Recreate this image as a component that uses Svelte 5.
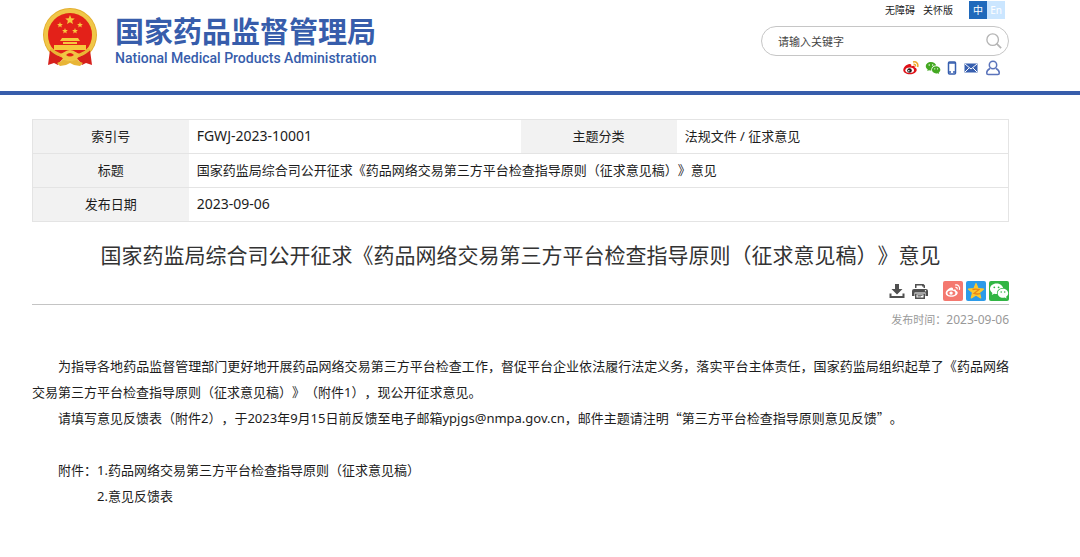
<script lang="ts">
	const docTitle = '国家药监局综合司公开征求《药品网络交易第三方平台检查指导原则（征求意见稿）》意见';

	const attachments = [
		'1.药品网络交易第三方平台检查指导原则（征求意见稿）',
		'2.意见反馈表'
	];

	let keyword = $state('');
</script>

{#snippet star(x: number, y: number, r: number)}
	<path
		transform="translate({x} {y}) scale({r})"
		d="M0-1 .26-.36.95-.31.43.14.59.81 0 .45-.59.81-.43.14-.95-.31-.26-.36z"
	/>
{/snippet}

{#snippet wechat(front: string, eye: string)}
	<path
		fill={front}
		d="M7.5 2.5C3.8 2.5 1 4.9 1 7.8c0 1.7.9 3.1 2.4 4.1l-.6 2 2.3-1.2c.8.2 1.5.3 2.400.3h.5C7.400 9.600 10.300 7 13.900 7h.2C13.500 4.400 10.800 2.500 7.500 2.500z"
	/>
	<path
		fill={front}
		d="M19.200 12.300c0-2.500-2.400-4.500-5.300-4.500s-5.200 2-5.200 4.500 2.300 4.500 5.200 4.500c.6 0 1.200-.1 1.800-.3l1.900 1-.5-1.700c1.300-.9 2.100-2.100 2.100-3.500z"
	/>
	<g fill={eye}>
		<circle cx="5.300" cy="6.300" r=".9" />
		<circle cx="9.600" cy="6.300" r=".9" />
		<circle cx="12.200" cy="11" r=".8" />
		<circle cx="15.700" cy="11" r=".8" />
	</g>
{/snippet}

<header>
	<a class="logo" href="/">
		<svg class="emblem" viewBox="0 0 56 60" aria-hidden="true">
			<circle cx="28" cy="27" r="27" fill="#e3ae2d" />
			<circle cx="28" cy="27" r="24" fill="none" stroke="#f0c648" stroke-width="4" />
			<circle cx="28" cy="27" r="22" fill="#e32119" />
			<g fill="#f6c83d">
				{@render star(28, 12, 5)}
				{@render star(18, 17, 3)}
				{@render star(38, 17, 3)}
				{@render star(23, 23, 3)}
				{@render star(33, 23, 3)}
				<path d="M20 30h16l2 3H18zM21 34h14v2H21zM12 37h32v5H12z" />
			</g>
			<path fill="#d6201c" d="M8 42c4 3 8 6 13 8l-5 7-4-2-6 2zM48 42c-4 3-8 6-13 8l5 7 4-2 6 2z" />
			<path
				fill="none"
				stroke="#e9b535"
				stroke-width="3"
				d="M9 41c3 4 7 5 12 7M47 41c-3 4-7 5-12 7"
			/>
			<path fill="#f1c544" d="M18 46c4-1 6-4 10-4s6 3 10 4c-2 4-5 6-10 6s-8-2-10-6z" />
			<path fill="#e32119" d="M24 47q4-4 8 0-4 3-8 0z" />
			<path fill="#e8b536" d="m15 55 7-3 6 2 6-2 7 3-3 3-6-1-4-2-4 2-6 1z" />
		</svg>
		<span class="names">
			<span class="name-zh">国家药品监督管理局</span>
			<span class="name-en">National Medical Products Administration</span>
		</span>
	</a>

	<div class="tools">
		<nav class="top-links">
			<a href="#accessible">无障碍</a>
			<a href="#care">关怀版</a>
			<span class="lang">
				<a class="active" href="#zh">中</a>
				<a href="#en">En</a>
			</span>
		</nav>
		<form class="search">
			<input type="search" placeholder="请输入关键字" aria-label="请输入关键字" bind:value={keyword} />
			<button aria-label="搜索">
				<svg viewBox="0 0 18 18" fill="none" stroke="#b4b4b4" stroke-width="1.500">
					<circle cx="7.500" cy="7.500" r="6.500" />
					<path d="m12 12 5 5" stroke-width="2" />
				</svg>
			</button>
		</form>
		<div class="social">
			<a href="#weibo" aria-label="微博">
				<svg viewBox="0 0 16 16">
					<path
						fill="#df1118"
						d="M6.500 4C3.500 4.300.3 7.300.3 10c0 2.500 3 4.300 6.400 4.300 4 0 7-2.200 7-4.600 0-1.400-1-2-2-2.300.4-1.600-1-2.100-3.400-1.100.4-1.600-.3-2.400-1.800-2.300z"
					/>
					<ellipse cx="6.700" cy="10.300" rx="4.300" ry="2.700" fill="#fff" />
					<circle cx="6.500" cy="10.500" r="2.300" fill="#231a1a" />
					<circle cx="5.800" cy="10.800" r=".8" fill="#fff" />
					<path fill="none" stroke="#eea629" stroke-width="1.500" d="M10 2c3.500-.8 5.600 2 4.600 5M10.500 4.300c1.600-.2 2.300.8 1.900 2.200" />
				</svg>
			</a>
			<a href="#wechat" aria-label="微信">
				<svg viewBox="0 0 20 20">{@render wechat('#43a821', '#fff')}</svg>
			</a>
			<a class="narrow" href="#mobile" aria-label="手机版">
				<svg viewBox="0 0 10 16">
					<rect x="1.500" y="2" width="7" height="12" rx="1" fill="#fff" stroke="#375faf" stroke-width="1.500" />
					<path stroke="#375faf" stroke-width="1.500" d="M2 12h2M6 12h2M2 3h6" />
				</svg>
			</a>
			<a href="#mail" aria-label="邮箱">
				<svg viewBox="0 0 16 16">
					<rect x="1.500" y="3.500" width="13" height="9" fill="#375faf" />
					<path fill="none" stroke="#fff" d="m2 4 6 5 6-5M2 12l4-4M14 12l-4-4" />
				</svg>
			</a>
			<a href="#user" aria-label="用户">
				<svg viewBox="0 0 16 16" fill="none" stroke="#5b74bb" stroke-width="1.500">
					<circle cx="8" cy="5" r="3.700" />
					<path d="M5 8.500C3 9.500 1.700 11 1.700 13q0 1.500 1.500 1.500h9.600q1.500 0 1.500-1.500c0-2-1.300-3.500-3.300-4.500" />
				</svg>
			</a>
		</div>
	</div>
</header>

<main>
	<table>
		<tbody>
			<tr>
				<th scope="row">索引号</th>
				<td class="number">FGWJ-2023-10001</td>
				<th scope="row">主题分类</th>
				<td>法规文件 / 征求意见</td>
			</tr>
			<tr>
				<th scope="row">标题</th>
				<td colspan="3">{docTitle}</td>
			</tr>
			<tr>
				<th scope="row">发布日期</th>
				<td class="number" colspan="3">2023-09-06</td>
			</tr>
		</tbody>
	</table>

	<h1>{docTitle}</h1>

	<div class="actions">
		<button aria-label="下载">
			<svg viewBox="0 0 20 20" fill="#505050">
				<path d="M8 3h4v5h3.500L10 13.500 4.500 8H8z" />
				<path d="M2.500 12.500h2V15h11v-2.500h2V17h-15z" />
			</svg>
		</button>
		<button class="print" aria-label="打印">
			<svg viewBox="0 0 20 20" fill="#505050">
				<path d="M5 3h8.500L15 4.500V7h-1.500V5.500H12v-1H6.500V7H5z" />
				<path d="M4 8h12q2 0 2 2v5h-2.500v-3.500h-11V15H2v-5q0-2 2-2z" />
				<path d="M5 12.500h10V18H5zm1.500 1v3h7v-3z" />
				<path d="M7.500 14h5v.8h-5zM7.500 15.500h3.500v.7H7.500z" />
				<circle cx="15.500" cy="9.800" r=".7" fill="#fff" />
			</svg>
		</button>
		<button class="share weibo" aria-label="分享到微博">
			<svg viewBox="0 0 20 20">
				<path
					fill="#fff"
					d="M8.500 6.500c-2.800.5-5.800 3.300-5.800 5.700 0 2.100 2.500 3.600 5.600 3.600 3.600 0 6.400-2 6.400-4 0-1.200-.9-1.700-1.800-2 .3-1.400-.9-1.800-2.900-1 .3-1.600-.3-2.400-1.500-2.300z"
				/>
				<ellipse cx="8.400" cy="12" rx="4" ry="2.500" fill="#f4786f" />
				<circle cx="8.100" cy="12.100" r="1.700" fill="#fff" />
				<path fill="none" stroke="#fff" stroke-width="1.200" d="M12 4c3.400-.7 5.300 1.800 4.400 4.900M12.300 6.300c1.500-.2 2.200.7 1.800 2.100" />
			</svg>
		</button>
		<button class="share qzone" aria-label="分享到QQ空间">
			<svg viewBox="0 0 20 20">
				<g fill="#fdc82c" stroke="#fdc82c" stroke-width=".15" stroke-linejoin="round">
					{@render star(10, 10.500, 8)}
				</g>
				<path fill="none" stroke="#e98516" stroke-width="1.300" d="M6.500 8.500c2.500-.6 4.500-.6 6.500 0l-5 4c2 .6 4 .6 6 .2" />
			</svg>
		</button>
		<button class="share wechat" aria-label="分享到微信">
			<svg viewBox="0 0 20 20">{@render wechat('#fff', '#31b544')}</svg>
		</button>
	</div>

	<p class="published">发布时间：<time datetime="2023-09-06">2023-09-06</time></p>

	<article>
		<p>
			为指导各地药品监督管理部门更好地开展药品网络交易第三方平台检查工作，督促平台企业依法履行法定义务，落实平台主体责任，国家药监局组织起草了《药品网络交易第三方平台检查指导原则（征求意见稿）》（附件1），现公开征求意见。
		</p>
		<p>
			请填写意见反馈表（附件2），于2023年9月15日前反馈至电子邮箱ypjgs@nmpa.gov.cn，邮件主题请注明<span class="quoted">“第三方平台检查指导原则意见反馈”</span>。
		</p>
		<div class="attachments">
			<span>附件：</span>
			<ul>
				{#each attachments as attachment}
					<li><a href="#attachment">{attachment}</a></li>
				{/each}
			</ul>
		</div>
	</article>
</main>

<style>
	:global(body) {
		margin: 0;
		background: #fff;
		color: #1c1c1c;
		font-family: 'Noto Sans', 'Noto Sans CJK SC', sans-serif;
		font-size: 13px;
		text-spacing-trim: space-all;
	}

	a {
		color: inherit;
		text-decoration: none;
	}

	button {
		padding: 0;
		border: none;
		background: none;
		cursor: pointer;
	}

	svg {
		display: block;
		width: 100%;
		height: 100%;
	}

	header {
		display: flex;
		justify-content: space-between;
		height: 91px;
		padding: 0 71px 0 42px;
		border-bottom: 4px solid #375dab;
	}

	.logo {
		display: flex;
		align-items: flex-start;
		gap: 17px;
		padding-top: 8px;
		color: #375dab;
	}

	.emblem {
		width: 56px;
		height: 60px;
	}

	.names {
		display: flex;
		flex-direction: column;
		padding-top: 4px;
	}

	.name-zh {
		font-family: 'Noto Sans CJK SC', sans-serif;
		font-size: 29px;
		font-weight: 700;
		line-height: 36px;
	}

	.name-en {
		font-family: Roboto, sans-serif;
		font-size: 14px;
		font-weight: 500;
		line-height: 20px;
	}

	.tools {
		width: 248px;
		padding-top: 1px;
	}

	.top-links {
		display: flex;
		justify-content: flex-end;
		align-items: center;
		gap: 8px;
		padding-right: 4px;
		font-size: 10px;
		line-height: 18px;
	}

	.lang {
		display: flex;
		margin-left: 8px;
		color: #fff;
		text-align: center;
	}

	.lang a {
		width: 18px;
		background: #cbe6ff;
	}

	.lang .active {
		background: #1f69bb;
	}

	.search {
		display: flex;
		align-items: center;
		box-sizing: border-box;
		height: 30px;
		margin-top: 7px;
		padding: 0 6px 0 16px;
		border: 1px solid #c6c6c6;
		border-radius: 15px;
	}

	.search input {
		flex: 1;
		min-width: 0;
		padding: 0;
		border: none;
		outline: none;
		background: none;
		font-family: inherit;
		font-size: 11px;
	}

	.search input::placeholder {
		color: #444;
	}

	.search button {
		width: 16px;
		height: 16px;
	}

	.social {
		display: flex;
		justify-content: flex-end;
		gap: 6px;
		margin-top: 4px;
		padding-right: 8px;
	}

	.social a {
		width: 16px;
		height: 16px;
	}

	.social .narrow {
		width: 10px;
	}

	main {
		padding: 24px 71px 24px 32px;
	}

	table {
		width: 100%;
		border: 1px solid #e4e4e4;
		border-collapse: collapse;
		table-layout: fixed;
	}

	tr {
		border-bottom: 1px solid #e4e4e4;
	}

	th,
	td {
		height: 31px;
		padding: 0 8px 2px;
		line-height: 20px;
	}

	th {
		box-sizing: border-box;
		width: 16%;
		background: #f2f2f2;
		font-weight: 400;
	}

	.number {
		font-size: 14px;
	}

	h1 {
		margin: 18px 0 11px;
		color: #333;
		font-size: 21px;
		font-weight: 400;
		line-height: 30px;
		text-align: center;
	}

	.actions {
		display: flex;
		justify-content: flex-end;
		gap: 3px;
		padding-bottom: 3px;
		border-bottom: 1px solid #c4c4c4;
	}

	.actions button {
		width: 20px;
		height: 20px;
		border-radius: 2px;
	}

	.actions .print {
		margin-right: 10px;
	}

	.actions .weibo {
		background: #f4786f;
	}

	.actions .qzone {
		background: #2c9be9;
	}

	.actions .wechat {
		background: #31b544;
	}

	.published {
		margin: 5px 0 23px;
		color: #999;
		font-size: 11px;
		line-height: 20px;
		text-align: right;
	}

	time {
		font-size: 12px;
	}

	article {
		line-height: 26px;
	}

	article p {
		margin: 0;
		text-align: justify;
		text-indent: 2em;
	}

	.quoted {
		font-family: 'Noto Sans CJK SC', sans-serif;
	}

	.attachments {
		display: flex;
		margin-top: 26px;
		padding-left: 2em;
	}

	ul {
		margin: 0;
		padding: 0;
		list-style: none;
	}
</style>
